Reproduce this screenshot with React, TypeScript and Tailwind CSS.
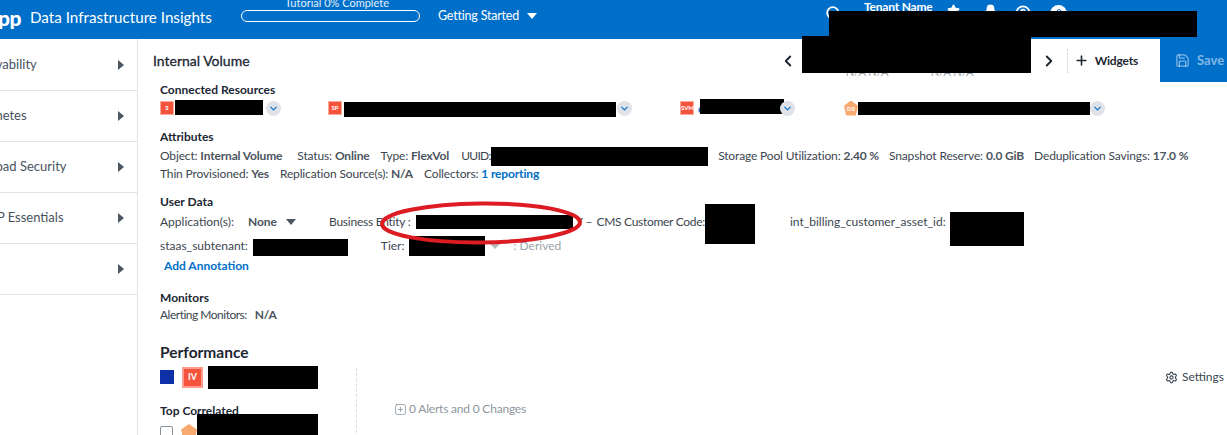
import type { ReactNode } from 'react'
import { ChevronDown, ChevronLeft, ChevronRight, Plus, Save, Search, Star, Settings, SquarePlus, HelpCircle, Bell, User } from 'lucide-react'

const NAV = ['Observability', 'Kubernetes', 'Workload Security', 'ONTAP Essentials', '']

export default function App() {
  return (
    <div className="relative h-[435px] w-[1227px] overflow-hidden bg-white font-['Lato',sans-serif] text-[12px] text-[#3c4650]">
      <Header />
      <div className="flex h-[396px]">
        <Sidebar />
        <main className="relative flex-1 min-w-0">
          <Toolbar />
          <div className="pl-[22px]">
            <Connected />
            <Attributes />
            <UserData />
            <Monitors />
            <Performance />
          </div>
          <RedCircle />
        </main>
      </div>
    </div>
  )
}

function Black({ className }: { className: string }) {
  return <div className={`bg-black shrink-0 ${className}`} />
}

function Header() {
  return (
    <header className="relative flex h-[39px] items-center bg-[#006fc9] text-white">
      <div className="-ml-[69px] mb-[5px] w-[90px] shrink-0 text-right text-[21px] font-black leading-none tracking-[-0.5px]">NetApp</div>
      <div className="ml-[9px] mb-[5px] w-[190px] shrink-0 whitespace-nowrap text-[15.2px]">Data Infrastructure Insights</div>
      <div className="relative ml-[21px] h-[12px] w-[179px] shrink-0 self-start mt-[10px] rounded-full border border-white">
        <span className="absolute -top-[16px] left-[43px] whitespace-nowrap text-[11px] text-white/90">Tutorial 0% Complete</span>
      </div>
      <div className="ml-[18px] flex items-center gap-[8px] self-start mt-[7px] text-[12.5px] tracking-[-0.2px]">
        Getting Started
        <span className="h-0 w-0 border-x-[5px] border-t-[6px] border-x-transparent border-t-white" />
      </div>
      <Search className="absolute left-[825px] top-[5px]" size={17} strokeWidth={2.5} />
      <span className="absolute left-[864px] top-[-2px] text-[12px] font-bold tracking-[-0.2px]">Tenant Name</span>
      <Star className="absolute left-[947px] top-[4px]" size={13} fill="white" />
      <Bell className="absolute left-[984px] top-[4px]" size={13} fill="white" />
      <HelpCircle className="absolute left-[1015px] top-[5px]" size={16} strokeWidth={2.5} />
      <div className="absolute left-[1050px] top-[5px] grid h-[17px] w-[17px] place-items-center rounded-full bg-white text-[#006fc9]">
        <User size={12} />
      </div>
      <Black className="absolute left-[829px] top-[11px] h-[26px] w-[368px]" />
    </header>
  )
}

function Sidebar() {
  return (
    <nav className="-ml-[39px] w-[177px] shrink-0 border-r border-[#dfe3e8] pt-[1px]">
      {NAV.map((n) => (
        <div key={n || 'blank'} className="flex h-[51px] items-center justify-between border-b border-[#dfe3e8] pr-[13px] text-[13px] text-[#47525d]">
          <span>{n}</span>
          <span className="h-0 w-0 border-y-[5px] border-l-[6px] border-y-transparent border-l-[#4d5761]" />
        </div>
      ))}
    </nav>
  )
}

function Toolbar() {
  return (
    <div className="relative flex h-[43px] items-center pl-[15px] text-[#1c2733]">
      <h1 className="text-[14px] [-webkit-text-stroke:0.3px]">Internal Volume</h1>
      <div className="ml-auto flex h-full items-center">
        <ChevronLeft size={18} strokeWidth={2.5} />
        <div className="relative ml-[5px] h-full w-[229px] shrink-0">
          <span className="absolute top-[27px] left-[44px] whitespace-nowrap text-[11px] leading-none text-[#9aa3ab]">N/A N/A</span>
          <span className="absolute top-[27px] left-[129px] whitespace-nowrap text-[11px] leading-none text-[#9aa3ab]">N/A N/A</span>
          <Black className="absolute -top-[3px] left-0 h-[37px] w-[229px]" />
        </div>
        <ChevronRight className="ml-[9px]" size={18} strokeWidth={2.5} />
        <div className="ml-[9px] h-[24px] border-l border-dotted border-[#c9ced3]" />
        <Plus className="ml-[6px]" size={15} strokeWidth={2.5} />
        <span className="ml-[6px] text-[12px] font-bold tracking-[-0.2px]">Widgets</span>
        <div className="ml-[22px] flex h-full w-[67px] items-center gap-[7px] bg-[#006fc9] pl-[15px] text-[13px] font-bold text-white/50">
          <Save size={15} />
          Save
        </div>
      </div>
    </div>
  )
}

function Chip({ label, bg, className, blackClass, chevron, lead, pentagon }: { label: string; bg: string; className: string; blackClass: string; chevron: string; lead?: boolean; pentagon?: boolean }) {
  return (
    <div className={`flex items-center ${className}`}>
      {pentagon ? (
        <span className={`grid h-[15px] w-[14px] shrink-0 place-items-center pt-[2px] text-[6px] font-bold leading-none text-white [clip-path:polygon(50%_0,100%_35%,85%_100%,15%_100%,0_35%)] ${bg}`}>{label}</span>
      ) : (
        <span className={`grid h-[14px] w-[14px] shrink-0 place-items-center border border-[#ffa99b] text-[6px] font-bold leading-none text-white ${bg}`}>{label}</span>
      )}
      {lead && <span className="ml-[4px] -mr-[6px] text-[11px] font-bold leading-none text-[#006fc9]">c</span>}
      <Black className={blackClass} />
      <Chevron className={chevron} />
    </div>
  )
}

function Chevron({ className }: { className: string }) {
  return (
    <span className={`grid h-[15px] w-[15px] shrink-0 place-items-center rounded-full bg-[#dfe3e8] text-[#006fc9] ${className}`}>
      <ChevronDown size={11} strokeWidth={2.5} />
    </span>
  )
}

function Connected() {
  return (
    <section>
      <h2 className="text-[12px] font-bold leading-[16px] text-[#1c2733]">Connected Resources</h2>
      <div className="mt-[2px] flex h-[16px] items-center">
        <Chip label="S" bg="bg-[#f4533c]" className="w-[168px]" blackClass="ml-[1px] -mt-[2px] h-[15px] w-[88px]" chevron="ml-[3px]" />
        <Chip label="SP" bg="bg-[#f4533c]" className="w-[352px]" blackClass="ml-[2px] mt-[2px] h-[15px] w-[272px]" chevron="ml-[1px]" />
        <Chip label="SVM" bg="bg-[#f4533c]" className="w-[164px]" blackClass="ml-[3px] -mt-[4px] h-[15px] w-[84px]" chevron="-ml-[4px]" lead />
        <Chip label="DS" bg="bg-[#f8a970]" className="" blackClass="ml-0 mt-[1px] h-[13px] w-[232px]" chevron="ml-0" pentagon />
      </div>
    </section>
  )
}

function Attr({ k, className, children }: { k: string; className?: string; children: ReactNode }) {
  return <span className={`whitespace-nowrap tracking-[-0.15px] ${className ?? ''}`}>{k} <b className="font-bold text-[#4c5560]">{children}</b></span>
}

function Attributes() {
  return (
    <section className="mt-[13px]">
      <h2 className="text-[12px] font-bold leading-[16px] text-[#1c2733]">Attributes</h2>
      <div className="mt-[2px] flex h-[18px] items-center">
        <Attr k="Object:">Internal Volume</Attr>
        <Attr k="Status:" className="ml-[15px]">Online</Attr>
        <Attr k="Type:" className="ml-[11px]">FlexVol</Attr>
        <span className="ml-[12px] w-[30px] whitespace-nowrap tracking-[-0.7px]">UUID:</span>
        <Black className="-my-[1px] h-[19px] w-[217px]" />
        <Attr k="Storage Pool Utilization:" className="ml-[10px]">2.40 %</Attr>
        <Attr k="Snapshot Reserve:" className="ml-[10px]">0.0 GiB</Attr>
        <Attr k="Deduplication Savings:" className="ml-[10px]">17.0 %</Attr>
      </div>
      <div className="flex h-[18px] items-center gap-[11px]">
        <Attr k="Thin Provisioned:">Yes</Attr>
        <Attr k="Replication Source(s):">N/A</Attr>
        <span className="tracking-[-0.15px]">Collectors: <b className="font-bold text-[#006fc9]">1 reporting</b></span>
      </div>
    </section>
  )
}

function UserData() {
  return (
    <section className="mt-[11px]">
      <h2 className="text-[12px] font-bold leading-[16px] text-[#1c2733]">User Data</h2>
      <div className="mt-[2px] flex h-[20px] items-center">
        <span>Application(s):</span>
        <b className="ml-[14px] font-bold text-[#4c5560]">None</b>
        <span className="ml-[9px] h-0 w-0 border-x-[5px] border-t-[6px] border-x-transparent border-t-[#4c5560]" />
        <span className="ml-[33px] whitespace-nowrap tracking-[-0.25px]">Business Entity :</span>
        <Black className="ml-[5px] -my-[1px] h-[14px] w-[157px]" />
        <span className="ml-[3px] whitespace-nowrap">Y –</span>
        <span className="ml-[4px] whitespace-nowrap tracking-[-0.3px]">CMS Customer Code:</span>
        <Black className="mt-[2px] -mb-[2px] h-[40px] w-[50px]" />
        <span className="ml-[35px] whitespace-nowrap">int_billing_customer_asset_id:</span>
        <Black className="ml-[4px] mt-[7px] -mb-[7px] h-[34px] w-[74px]" />
      </div>
      <div className="mt-[4px] flex h-[20px] items-center">
        <span>staas_subtenant:</span>
        <Black className="ml-[5px] mt-[3px] h-[17px] w-[95px]" />
        <span className="ml-[33px]">Tier:</span>
        <Black className="ml-[5px] h-[20px] w-[76px]" />
        <span className="ml-[5px] h-0 w-0 border-x-[5px] border-t-[5px] border-x-transparent border-t-[#b6bcc2]" />
        <span className="ml-[13px] text-[#9aa3ab]">: Derived</span>
      </div>
      <button className="mt-[1px] ml-[4px] block text-[12px] font-bold leading-[18px] text-[#006fc9]">Add Annotation</button>
    </section>
  )
}

function Monitors() {
  return (
    <section className="mt-[15px]">
      <h2 className="text-[12px] font-bold leading-[16px] text-[#1c2733]">Monitors</h2>
      <div className="flex h-[18px] items-center gap-[8px]">
        <span className="tracking-[-0.5px]">Alerting Monitors:</span>
        <b className="font-bold tracking-[-0.2px] text-[#4c5560]">N/A</b>
      </div>
    </section>
  )
}

function Performance() {
  return (
    <section className="mt-[17px]">
      <h2 className="text-[15.5px] font-bold leading-[22px] text-[#1c2733]">Performance</h2>
      <div className="flex">
        <div className="w-[196px] shrink-0">
          <div className="mt-[2px] flex h-[24px] items-center">
            <span className="h-[14px] w-[14px] shrink-0 bg-[#0d2fa8]" />
            <span className="ml-[8px] grid h-[21px] w-[21px] shrink-0 place-items-center border-2 border-[#ff9c8e] bg-[#f4533c] text-[9px] font-bold text-white">IV</span>
            <Black className="ml-[5px] h-[23px] w-[110px]" />
          </div>
          <div className="mt-[12px] flex h-[20px] items-center">
            <h3 className="text-[12px] font-bold text-[#1c2733]">Top Correlated</h3>
          </div>
          <div className="mt-[3px] flex h-[16px] items-center">
            <span className="h-[13px] w-[13px] shrink-0 rounded-[2px] border border-[#8a929a]" />
            <span className="ml-[8px] h-[16px] w-[16px] shrink-0 bg-[#f8a970] [clip-path:polygon(50%_0,100%_35%,85%_100%,15%_100%,0_35%)]" />
          </div>
          <Black className="relative -mt-[26px] ml-[37px] h-[27px] w-[121px]" />
        </div>
        <div className="mt-[5px] h-[70px] border-l border-dashed border-[#d9dde1]" />
        <div className="ml-[37px] mt-[37px] flex h-[18px] items-center gap-[2px] text-[12px] tracking-[-0.2px] text-[#8d969e]">
          <SquarePlus size={13} strokeWidth={1.5} />
          0 Alerts and 0 Changes
        </div>
        <div className="ml-auto mr-[3px] mt-[5px] flex h-[18px] items-center gap-[4px]">
          <Settings size={13} />
          Settings
        </div>
      </div>
    </section>
  )
}

function RedCircle() {
  return (
    <svg className="absolute left-[241px] top-[161px]" width="206" height="46" viewBox="0 0 206 46" fill="none">
      <ellipse cx="102" cy="23" rx="99" ry="19.5" stroke="#dc1c22" strokeWidth="4" transform="rotate(-0.5 102 23)" />
    </svg>
  )
}
